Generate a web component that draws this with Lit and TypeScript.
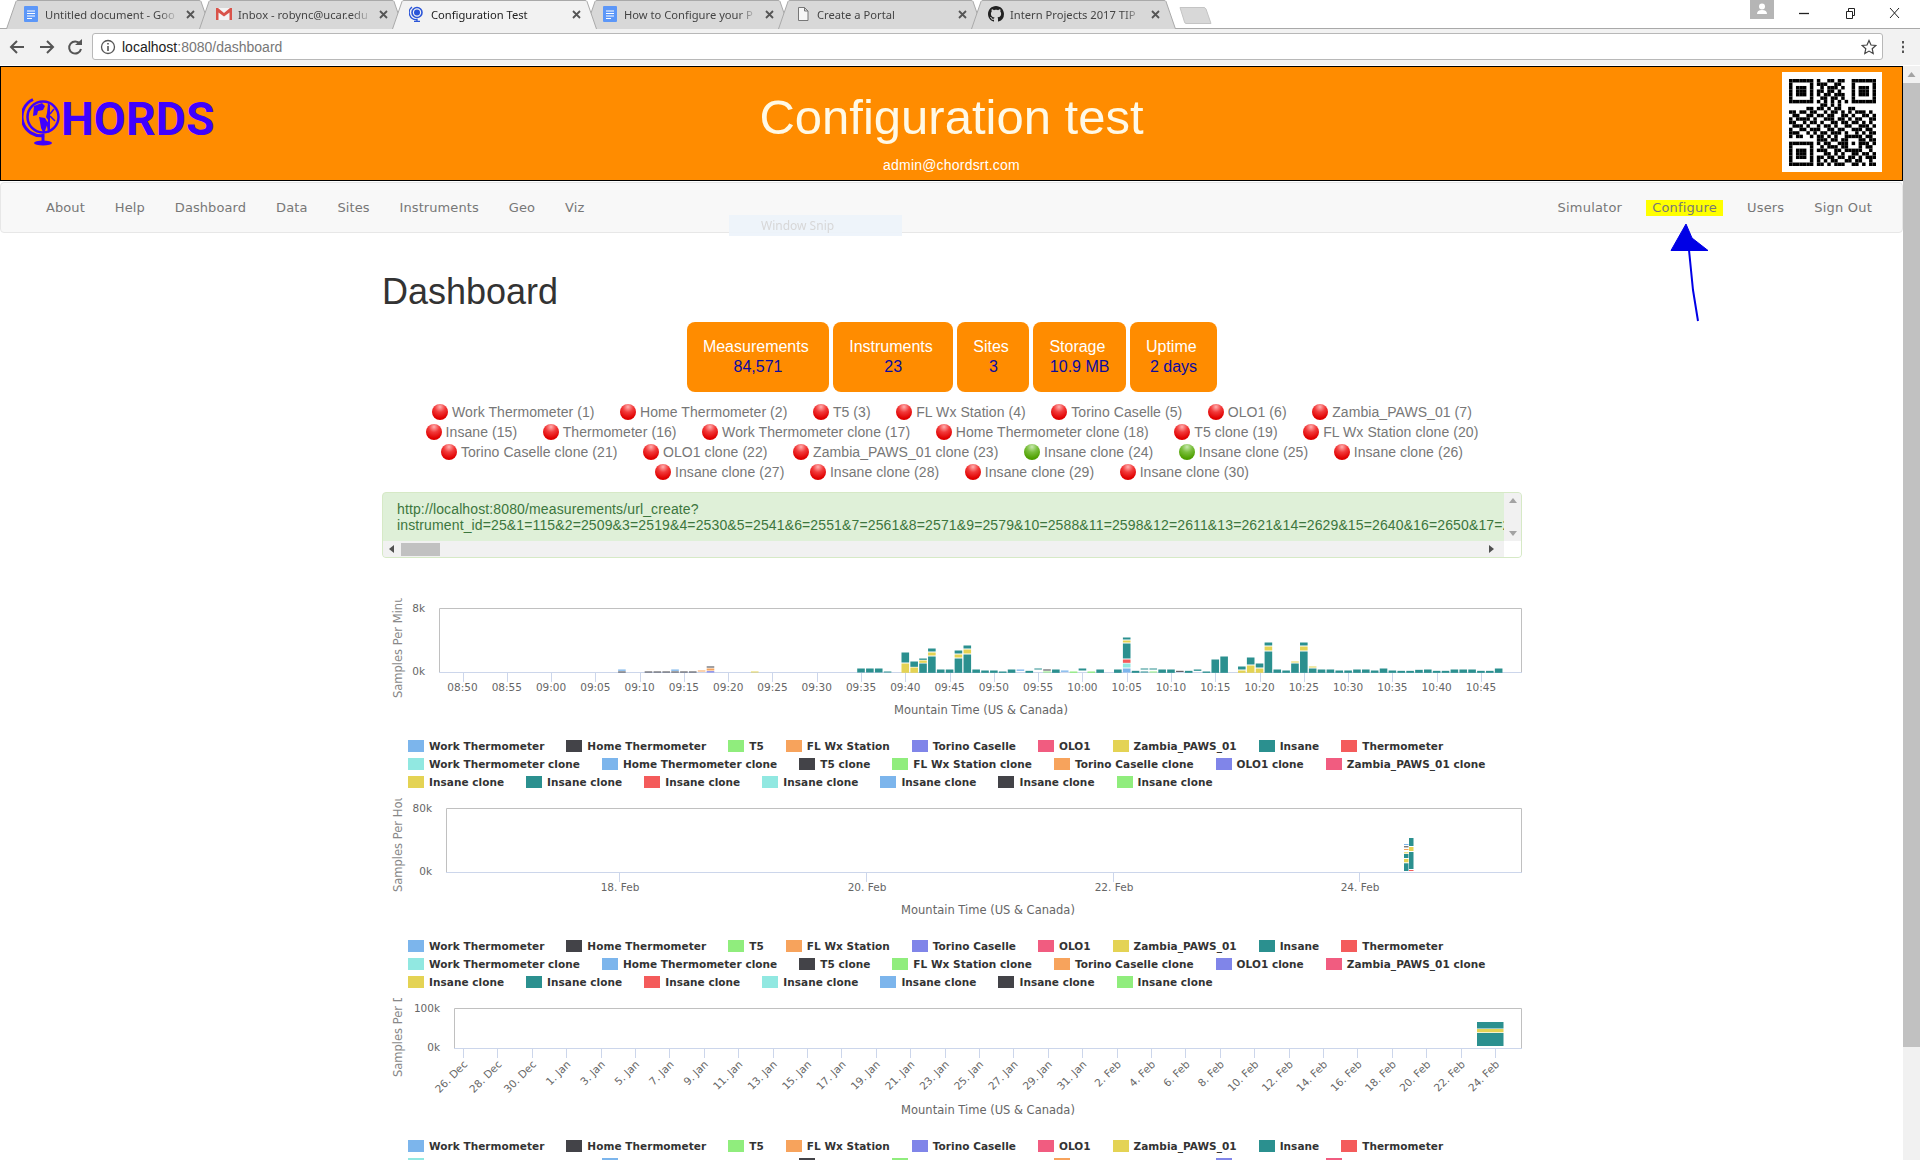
import { LitElement, html, css, svg } from "lit";
import { customElement } from "lit/decorators.js";

const C: Record<string, string> = {
  b: "#7cb5ec", d: "#434348", g: "#90ed7d", o: "#f7a35c", p: "#8085e9",
  k: "#f15c80", y: "#e4d354", t: "#2b908f", r: "#f45b5b", c: "#91e8e1",
};

const LEGEND: [string, string][] = [
  ["Work Thermometer", "b"], ["Home Thermometer", "d"], ["T5", "g"], ["FL Wx Station", "o"],
  ["Torino Caselle", "p"], ["OLO1", "k"], ["Zambia_PAWS_01", "y"], ["Insane", "t"], ["Thermometer", "r"],
  ["Work Thermometer clone", "c"], ["Home Thermometer clone", "b"], ["T5 clone", "d"],
  ["FL Wx Station clone", "g"], ["Torino Caselle clone", "o"], ["OLO1 clone", "p"], ["Zambia_PAWS_01 clone", "k"],
  ["Insane clone", "y"], ["Insane clone", "t"], ["Insane clone", "r"], ["Insane clone", "c"],
  ["Insane clone", "b"], ["Insane clone", "d"], ["Insane clone", "g"],
];

const STATUS: [string, boolean][][] = [
  [["Work Thermometer (1)", false], ["Home Thermometer (2)", false], ["T5 (3)", false], ["FL Wx Station (4)", false], ["Torino Caselle (5)", false], ["OLO1 (6)", false], ["Zambia_PAWS_01 (7)", false]],
  [["Insane (15)", false], ["Thermometer (16)", false], ["Work Thermometer clone (17)", false], ["Home Thermometer clone (18)", false], ["T5 clone (19)", false], ["FL Wx Station clone (20)", false]],
  [["Torino Caselle clone (21)", false], ["OLO1 clone (22)", false], ["Zambia_PAWS_01 clone (23)", false], ["Insane clone (24)", true], ["Insane clone (25)", true], ["Insane clone (26)", false]],
  [["Insane clone (27)", false], ["Insane clone (28)", false], ["Insane clone (29)", false], ["Insane clone (30)", false]],
];

const STATS = [["Measurements", "84,571"], ["Instruments", "23"], ["Sites", "3"], ["Storage", "10.9 MB"], ["Uptime", "2 days"]];

const BARS = `18:b240-244,d246-249;21:d246-249;22:d246-249;23:d246-249;24:b240-244,d246-249;25:d246-249;26:d246-249;27:o243-246;
28:d231-234,o237-243,p245-249;33:y246-249;45:t237-249;46:t237-249;47:t237-249;48:t246-249;
50:y222-250,t189-219;51:y234-250,t216-232;52:t222-250,y213-220,t207-211;53:t201-250,y189-198,t177-186;54:t240-250;55:t240-250;
56:t207-250,y195-204,t183-192;57:t195-250,y180-192,t168-177;58:t240-250;59:t243-250;60:t243-250;61:t246-250;62:t240-250;63:b240-244;64:t244-250;
65:t237-240;66:d240-243,g246-249;67:t240-250;68:b243-247;69:g246-250;70:t237-243;71:g246-250;72:t240-250;74:t240-250;
75:b237-249,c222-234,r210-220,t162-207,y153-159,t144-150;76:t244-250;77:t237-240,t246-249;78:t237-240,g246-249;79:t240-250;80:t240-250;
81:d244-247;82:t244-250;83:t240-244;84:t246-250;85:t210-250;86:t201-250;88:y243-250,t231-240;89:y228-250,t204-225;90:y237-250,t222-234;
91:t186-250,y171-183,t159-168;92:t240-250;93:t243-250;94:t222-250,y216-219;95:t186-250,y171-183,t159-168;96:t237-250,y231-234;
97:t240-250;98:t240-250;99:t243-250;100:t243-250;101:t240-250;102:t240-250;103:t243-250;104:t237-250;105:t243-250;106:t244-250;107:t244-250;
108:t241-250;109:t240-250;110:t244-250;111:t244-250;112:t240-250;113:t240-250;114:t240-250;115:t244-250;116:t244-250;117:t237-250`;

const QR = [
  "1111111" + "01001101100" + "1111111",
  "1000001" + "01110011000" + "1000001",
  "1011101" + "00101110100" + "1011101",
  "1011101" + "01101101000" + "1011101",
  "1011101" + "01011011100" + "1011101",
  "1000001" + "00110110100" + "1000001",
  "1111111" + "01010101010" + "1111111",
  "0000000" + "00110101000" + "0000000",
  "0000011011010110011000000",
  "1101101100101101010111010",
  "0110011011011001101001101",
  "1011110100111011010110011",
  "1100101101001101101101010",
  "0111010010110100110011101",
  "1001101110011011001110110",
  "1110010101101110100101011",
  "1011001011010100111110110",
  "0000000011101101100011011",
  "1111111010110011101011101",
  "1000001001011101100010110",
  "1011101011100110111110010",
  "1011101000110101001101101",
  "1011101011011011011010111",
  "1000001010101100110110010",
  "1111111011010111001101011",
];

const GH = "M8 0C3.58 0 0 3.58 0 8c0 3.54 2.29 6.53 5.47 7.59.4.07.55-.17.55-.38 0-.19-.01-.82-.01-1.49-2.01.37-2.53-.49-2.69-.94-.09-.23-.48-.94-.82-1.13-.28-.15-.68-.52-.01-.53.63-.01 1.08.58 1.23.82.72 1.21 1.87.87 2.33.66.07-.52.28-.87.51-1.07-1.78-.2-3.64-.89-3.64-3.95 0-.87.31-1.59.82-2.15-.08-.2-.36-1.02.08-2.12 0 0 .67-.21 2.2.82.64-.18 1.32-.27 2-.27.68 0 1.36.09 2 .27 1.53-1.04 2.2-.82 2.2-.82.44 1.1.16 1.92.08 2.12.51.56.82 1.27.82 2.15 0 3.07-1.87 3.75-3.65 3.95.29.25.54.73.54 1.48 0 1.07-.01 1.93-.01 2.2 0 .21.15.46.55.38A8.013 8.013 0 0016 8c0-4.42-3.58-8-8-8z";

const icons: Record<string, unknown> = {
  doc: html`<svg class="fav" viewBox="0 0 16 16"><rect x="1" width="14" height="16" rx="1" fill="#5c97f8"/><path d="M4 5h8M4 7.5h8M4 10h8M4 12.5h5" stroke="#fff" stroke-width="1"/></svg>`,
  mail: html`<svg class="fav" viewBox="0 0 16 16"><rect y="2" width="16" height="12" fill="#f4f4f4"/><path d="M0 2h2l6 5 6-5h2v12h-2.5V6.5L8 10.5 2.500 6.500V14H0z" fill="#d9534a"/></svg>`,
  globe: html`<svg class="fav" viewBox="0 0 16 16"><circle cx="8" cy="6.500" r="5" fill="none" stroke="#2b55d8" stroke-width="1.600"/><circle cx="8" cy="6.500" r="3" fill="#2b55d8"/><path d="M3 1A7 7 0 0 0 8 13.500V15M5 15.500h6" fill="none" stroke="#2b55d8" stroke-width="1.300"/></svg>`,
  file: html`<svg class="fav" viewBox="0 0 16 16"><path d="M3.500 1.500h6l3.500 3.500v9.500h-9.500zM9.500 1.500V5h3.500" fill="#f6f6f6" stroke="#777"/></svg>`,
  gh: html`<svg class="fav" viewBox="0 0 16 16"><path d=${GH} fill="#222"/></svg>`,
};

const TABS = [
  ["doc", "Untitled document - Goo", false],
  ["mail", "Inbox - robync@ucar.edu", false],
  ["globe", "Configuration Test", true],
  ["doc", "How to Configure your P", false],
  ["file", "Create a Portal", false],
  ["gh", "Intern Projects 2017 TIP", false],
] as [string, string, boolean][];

const TICKS1 = ["08:50","08:55","09:00","09:05","09:10","09:15","09:20","09:25","09:30","09:35","09:40","09:45","09:50","09:55","10:00","10:05","10:10","10:15","10:20","10:25","10:30","10:35","10:40","10:45"];
const TICKS3 = ["26. Dec","28. Dec","30. Dec","1. Jan","3. Jan","5. Jan","7. Jan","9. Jan","11. Jan","13. Jan","15. Jan","17. Jan","19. Jan","21. Jan","23. Jan","25. Jan","27. Jan","29. Jan","31. Jan","2. Feb","4. Feb","6. Feb","8. Feb","10. Feb","12. Feb","14. Feb","16. Feb","18. Feb","20. Feb","22. Feb","24. Feb"];

function frame(top: number, x0: number, bottom: number, title: string, high: string, titleX: number, titleBase: number) {
  const y0 = top + 18;
  return svg`
    <defs><clipPath id=${"c" + top}><rect x="382" y=${top + 8} width="40" height="130"></rect></clipPath></defs>
    <path d=${`M${x0 + 0.5} ${bottom}V${y0 + 0.5}H1521.500V${bottom}`} fill="none" stroke="#c0c0c0"></path>
    <path d=${`M${x0} ${bottom + 0.5}H1522`} stroke="#ccd6eb"></path>
    <text class="tl" x=${x0 - 14} y=${y0 + 4} text-anchor="end">${high}</text>
    <text class="tl" x=${x0 - 14} y=${bottom + 3} text-anchor="end">0k</text>
    <g clip-path=${`url(#c${top})`}>
      <text class="ttl" transform=${`translate(402,${titleBase}) rotate(-90)`}>${title}</text>
    </g>
    <text class="ttl2" x=${titleX} y=${top + 124} text-anchor="middle">Mountain Time (US &amp; Canada)</text>
  `;
}

function chart1() {
  const slots = BARS.replace(/\s/g, "").split(";").filter(Boolean);
  return html`<svg class="chart" viewBox="382 590 1140 148">
    ${frame(590, 439, 672, "Samples Per Minute", "8k", 981, 698)}
    ${TICKS1.map((t, i) => {
      const x = 462.5 + i * 44.28;
      const rx = Math.round(x) + 0.5;
      return svg`<path d=${`M${rx} 672V682`} stroke="#ccd6eb"></path><text class="tl" x=${x} y="691" text-anchor="middle">${t}</text>`;
    })}
    ${slots.map((s) => {
      const [n, segs] = s.split(":");
      const cx = 462.5 + Number(n) * 8.856;
      return segs.split(",").map((g) => {
        const [a, b] = g.slice(1).split("-").map(Number);
        return svg`<rect x=${cx - 3.8} y=${590 + a / 3 - 0.5} width="7.6" height=${(b - a) / 3} fill=${C[g[0]]}></rect>`;
      });
    })}
  </svg>`;
}

function chart2() {
  const segs: [number, number, number, string][] = [
    [1404, 863.3, 871, "t"], [1404, 859, 862.3, "y"], [1404, 854, 858, "t"], [1404, 852.3, 853.3, "y"],
    [1404, 849, 850, "o"], [1404, 846.3, 847.3, "d"], [1404, 844, 845, "b"],
    [1409, 870, 871, "r"], [1409, 852, 869, "t"], [1409, 847, 851, "y"], [1409, 838, 846, "t"],
  ];
  return html`<svg class="chart" viewBox="382 790 1140 148">
    ${frame(790, 446, 872, "Samples Per Hour", "80k", 988, 892)}
    ${[["18. Feb", 619], ["20. Feb", 866], ["22. Feb", 1113], ["24. Feb", 1359]].map(([t, x]) => svg`
      <path d=${`M${Number(x) + 0.5} 872V882`} stroke="#ccd6eb"></path>
      <text class="tl" x=${Number(x) + 1} y="891" text-anchor="middle">${t}</text>`)}
    ${segs.map(([x, a, b, c]) => svg`<rect x=${x} y=${a} width="4.500" height=${b - a} fill=${C[c]}></rect>`)}
  </svg>`;
}

function chart3() {
  return html`<svg class="chart" viewBox="382 990 1140 148">
    ${frame(990, 454, 1048, "Samples Per Day", "100k", 988, 1077)}
    ${TICKS3.map((t, i) => {
      const x = 463 + i * 34.4;
      const rx = Math.round(x) + 0.5;
      return svg`<path d=${`M${rx} 1048V1058`} stroke="#ccd6eb"></path>
        <text class="tl" text-anchor="end" transform=${`translate(${x + 5},1065) rotate(-45)`}>${t}</text>`;
    })}
    <rect x="1477" y="1022" width="26.500" height="6.500" fill=${C.t}></rect>
    <rect x="1477" y="1029" width="26.500" height="3.300" fill=${C.y}></rect>
    <rect x="1477" y="1033" width="26.500" height="13" fill=${C.t}></rect>
  </svg>`;
}

@customElement("app-root")
export class AppRoot extends LitElement {
  static styles = css`
    :host { display: block; position: relative; width: 1920px; height: 1160px; overflow: hidden; background: #fff; font-family: "Liberation Sans", Arial, sans-serif; }
    .strip { display: flex; height: 28px; padding-left: 6px; background: #fff; }
    .tab { position: relative; width: 205px; height: 28px; margin-right: -12px; flex: none; display: flex; align-items: center; font: 11.2px "Noto Sans", sans-serif; color: #444; }
    .tab.active { z-index: 2; color: #222; }
    .tabshape { position: absolute; left: 0; top: 0; width: 205px; height: 29px; }
    .fav { position: relative; width: 16px; height: 16px; margin-left: 17px; flex: none; }
    .tabtext { position: relative; margin-left: 6px; width: 134px; white-space: nowrap; -webkit-mask-image: linear-gradient(90deg, #000 85%, transparent); mask-image: linear-gradient(90deg, #000 85%, transparent); }
    .tabx { position: relative; margin-left: 7px; margin-right: 0; width: 9px; height: 9px; flex: none; }
    .newtab { width: 33px; height: 17px; margin: 7px 0 0 15px; flex: none; }
    .winctl { margin-left: auto; display: flex; width: 170px; height: 28px; }
    .toolbar { height: 37px; box-sizing: border-box; margin-top: 0; background: #f2f2f2; border-top: 1px solid #a9a9a9; border-bottom: 1px solid #f2f2f2; display: flex; align-items: center; }
    .navbtns { width: 92px; height: 24px; flex: none; }
    .omni { width: 1791px; height: 27px; box-sizing: border-box; background: #fff; border: 1px solid #b8b8b8; border-radius: 3px; display: flex; align-items: center; flex: none; font-size: 14px; color: #777; }
    .omni svg { margin-left: 7px; width: 16px; height: 16px; flex: none; }
    .omni span { margin-left: 6px; }
    .omni b { font-weight: normal; color: #222; }
    .star { margin-left: auto !important; margin-right: 5px; }
    .dots { width: 37px; height: 24px; flex: none; }
    .body { display: flex; height: 1095px; background: #fff; }
    .page { width: 1903px; flex: none; overflow: hidden; }
    .sb { width: 17px; flex: none; background: #f1f1f1; margin-top: 1px; display: flex; flex-direction: column; }
    .sbup { height: 17px; flex: none; }
    .sbthumb { height: 964px; background: #c1c1c1; flex: none; }
    .hdr { margin-top: 1px; height: 115px; box-sizing: border-box; background: #ff8c00; border: 1px solid #000; display: grid; grid-template-columns: 1fr auto 1fr; }
    .logo { display: flex; align-items: flex-start; padding: 31px 0 0 21px; }
    .logo svg { width: 42px; height: 48px; flex: none; margin-right: -3px; }
    .logo span { font: 700 46.5px/46px Roboto, sans-serif; color: #3f00ff; margin-top: -2px; }
    .mid { text-align: center; color: #fff; }
    .mid h2 { margin: 0; padding-top: 22px; font: 400 49px/56px "Liberation Sans", Arial, sans-serif; color: #fff9e6; }
    .mid div { margin-top: 12px; font-size: 14px; line-height: 16px; letter-spacing: .2px; }
    .qrbox { justify-self: end; width: 100px; height: 100px; margin: 5px 20px 0 0; background: #fff; display: flex; align-items: center; justify-content: center; }
    .qrbox svg { width: 87px; height: 87px; display: block; }
    .nav { margin-top: 1px; height: 51px; box-sizing: border-box; background: #f8f8f8; border: 1px solid #e7e7e7; border-radius: 4px; display: flex; align-items: center; justify-content: space-between; padding: 0 15px 0 30px; }
    .nav ul { display: flex; list-style: none; margin: 0; padding: 0; }
    .nav li { padding: 0 15px; font: 13px/16px "DejaVu Sans", sans-serif; color: #777; letter-spacing: .08px; }
    .nav ul.right li { letter-spacing: .2px; }
    .hl { display: block; background: #ff0; margin: 0 -6px; padding: 0 6px; }
    .wrap { width: 1140px; margin: 0 381px 0 382px; }
    h1 { margin: 39px 0 10px; font: 400 36px/40px "Liberation Sans", Arial, sans-serif; color: #333; }
    .stats { display: flex; justify-content: center; gap: 4px; }
    .stat { height: 70px; box-sizing: border-box; padding: 15px 16px; background: #ff8c00; border-radius: 8px; text-align: center; font-size: 16px; line-height: 20px; color: #fff; }
    .stat .lab { padding-right: 4.5px; }
    .stat .val { color: #0a0aa0; }
    .status { margin-top: 10px; }
    .srow { display: flex; justify-content: center; gap: 25.5px; height: 20px; align-items: center; font-size: 14px; color: #777; letter-spacing: .07px; }
    .sitem { display: flex; align-items: center; gap: 4px; white-space: nowrap; }
    .ball { width: 16px; height: 16px; border-radius: 50%; background: radial-gradient(circle at 50% 18%, #ffb0b0 0, #f23a3a 35%, #e00000 75%, #cc0000 100%); flex: none; }
    .ball.on { background: radial-gradient(circle at 50% 18%, #c8e8b0 0, #7bbf3e 35%, #4fa000 75%, #3f8c00 100%); }
    .alert { margin-top: 10px; height: 66px; box-sizing: border-box; background: #dff0d8; border: 1px solid #d6e9c6; border-radius: 4px; overflow: hidden; display: grid; grid-template-columns: 1fr 17px; grid-template-rows: 48px 16px; }
    .url { padding: 8px 0 0 14px; font-size: 14px; line-height: 16px; color: #3c763d; white-space: nowrap; overflow: hidden; letter-spacing: .13px; }
    .vb, .hb { background: #f1f1f1; }
    .vb { display: flex; flex-direction: column; justify-content: space-between; align-items: center; padding: 5px 0; box-sizing: border-box; background: #f1f1f1; }
    .hb { display: flex; align-items: center; padding: 0 6px; }
    .hthumb { width: 39px; height: 13px; background: #c1c1c1; margin-left: 7px; }
    .corner { background: #fff; }
    .arrow { width: 0; height: 0; border: 4px solid transparent; }
    .au { border-top: 0; border-bottom: 5px solid #a3a3a3; }
    .ad { border-bottom: 0; border-top: 5px solid #a3a3a3; }
    .al { border-left: 0; border-right: 5px solid #505050; }
    .ar { border-right: 0; border-left: 5px solid #505050; margin-left: auto; margin-right: 4px; }
    .blk { height: 200px; }
    .first { margin-top: 32px; }
    .chart { display: block; width: 1140px; height: 148px; }
    .tl { font: 10.5px "DejaVu Sans", sans-serif; fill: #666; }
    .ttl { font: 11.5px "DejaVu Sans", sans-serif; fill: #888; }
    .ttl2 { font: 11.5px "DejaVu Sans", sans-serif; fill: #666; }
    .legend { display: flex; flex-wrap: wrap; align-content: flex-start; column-gap: 22px; height: 52px; margin-top: -1px; padding-left: 26px; font: 700 10.5px/18px "DejaVu Sans", sans-serif; color: #333; letter-spacing: .04px; }
    .li { display: flex; align-items: center; gap: 5px; height: 18px; white-space: nowrap; }
    .sw { width: 16px; height: 12px; flex: none; }
    .hand { position: absolute; left: 1660px; top: 220px; width: 60px; height: 105px; }
    .snip { position: absolute; left: 729px; top: 215px; width: 173px; height: 21px; box-sizing: border-box; padding-left: 32px; background: #eef4fb; opacity: .95; font: 12px/21px "Noto Sans", sans-serif; color: #d6d6d6; }
  `;

  render() {
    const legend = html`<div class="legend">${LEGEND.map(([n, c]) => html`<div class="li"><span class="sw" style="background:${C[c]}"></span>${n}</div>`)}</div>`;
    return html`
      <div class="strip">
        ${TABS.map(([ic, t, a]) => html`
          <div class="tab ${a ? "active" : ""}">
            <svg class="tabshape" viewBox="0 0 205 29"><path d="M0.500 29L10 1.500Q10.500 .5 12 .5H193Q194.500 .5 195 1.500L204.500 29" fill=${a ? "#f2f2f2" : "#d8d8d8"} stroke="#a9a9a9"></path></svg>
            ${icons[ic]}
            <div class="tabtext">${t}</div>
            <svg class="tabx" viewBox="0 0 9 9"><path d="M1 1L8 8M8 1L1 8" stroke="#555" stroke-width="1.800"></path></svg>
          </div>`)}
        <svg class="newtab" viewBox="0 0 33 17"><path d="M1 .5H25Q26 .5 27 2L32 16.500H7Q6 16.500 5.500 15z" fill="#d8d8d8" stroke="#c4c4c4"></path></svg>
        <svg class="winctl" viewBox="0 0 170 28">
          <rect x="0" y="0" width="24" height="19" fill="#b5b5b5"></rect>
          <circle cx="12" cy="6.500" r="3" fill="#fff"></circle><path d="M7 14q0-4 5-4t5 4z" fill="#fff"></path>
          <path d="M49 13.500H59" stroke="#222" stroke-width="1.300"></path>
          <path d="M96.500 11.500h6v7h-6zM98.500 11V8.500h6v7h-1.500" fill="none" stroke="#222"></path>
          <path d="M140 8l9 10M149 8l-9 10" stroke="#222"></path>
        </svg>
      </div>
      <div class="toolbar">
        <svg class="navbtns" viewBox="0 0 92 24">
          <path d="M24 12H12M17 6l-6 6 6 6" fill="none" stroke="#555" stroke-width="2"></path>
          <path d="M40 12H52M47 6l6 6-6 6" fill="none" stroke="#555" stroke-width="2"></path>
          <path d="M80 9a6 6 0 1 0 1 5" fill="none" stroke="#555" stroke-width="2"></path><path d="M75 9h7V3z" fill="#555" transform="translate(0,1)"></path>
        </svg>
        <div class="omni">
          <svg viewBox="0 0 16 16"><circle cx="8" cy="8" r="6.500" fill="none" stroke="#555" stroke-width="1.300"></circle><path d="M8 7v5M8 4v1.600" stroke="#555" stroke-width="1.600"></path></svg>
          <span><b>localhost</b>:8080/dashboard</span>
          <svg class="star" viewBox="0 0 16 16"><path d="M8 1.500l2 4.500 4.800.5-3.600 3.200 1 4.800L8 12.100 3.800 14.500l1-4.800L1.200 6.500 6 6z" fill="none" stroke="#444" stroke-width="1.200"></path></svg>
        </div>
        <svg class="dots" viewBox="0 0 37 24"><path d="M20 6v2.500M20 10.800v2.500M20 15.500v2.500" stroke="#555" stroke-width="2"></path></svg>
      </div>
      <div class="body">
        <div class="page">
          <div class="hdr">
            <div class="logo">
              <svg viewBox="0 0 42 48">
                <path d="M11 1.500A19 19 0 0 0 22 37.500" fill="none" stroke="#3f00ff" stroke-width="3"></path>
                <circle cx="21" cy="19" r="15.500" fill="none" stroke="#3f00ff" stroke-width="2.500"></circle>
                <path d="M12 8l8-3 3 3-2 4-5 1-1 4-4 1zM17 19l6 1 3 5-2 5-2 6-3-6-1-6zM26 5l2 2v26l-2 2-1-7 1-6-2-3 1-4z" fill="#3f00ff"></path>
                <path d="M28 16l4-5M28 18l5 5" stroke="#3f00ff" stroke-width="1.500"></path>
                <path d="M21 36v8" stroke="#3f00ff" stroke-width="3"></path>
                <ellipse cx="21" cy="45" rx="9" ry="2.500" fill="#3f00ff"></ellipse>
              </svg>
              <span>HORDS</span>
            </div>
            <div class="mid"><h2>Configuration test</h2><div>admin@chordsrt.com</div></div>
            <div class="qrbox">
              <svg viewBox="0 0 25 25">
                ${QR.map((r, y) => r.split("").map((c, x) => c === "1" ? svg`<rect x=${x} y=${y} width="1" height="1" fill="#000"></rect>` : null))}
              </svg>
            </div>
          </div>
          <div class="nav">
            <ul>${["About", "Help", "Dashboard", "Data", "Sites", "Instruments", "Geo", "Viz"].map((n) => html`<li>${n}</li>`)}</ul>
            <ul class="right"><li>Simulator</li><li><span class="hl">Configure</span></li><li>Users</li><li>Sign Out</li></ul>
          </div>
          <div class="wrap">
            <h1>Dashboard</h1>
            <div class="stats">
              ${STATS.map(([l, v]) => html`<div class="stat"><div class="lab">${l}</div><div class="val">${v}</div></div>`)}
            </div>
            <div class="status">
              ${STATUS.map((row) => html`<div class="srow">${row.map(([t, on]) => html`<div class="sitem"><span class="ball ${on ? "on" : ""}"></span>${t}</div>`)}</div>`)}
            </div>
            <div class="alert">
              <div class="url">http://localhost:8080/measurements/url_create?<br>instrument_id=25&amp;1=115&amp;2=2509&amp;3=2519&amp;4=2530&amp;5=2541&amp;6=2551&amp;7=2561&amp;8=2571&amp;9=2579&amp;10=2588&amp;11=2598&amp;12=2611&amp;13=2621&amp;14=2629&amp;15=2640&amp;16=2650&amp;17=2661&amp;18=2671</div>
              <div class="vb"><span class="arrow au"></span><span class="arrow ad"></span></div>
              <div class="hb"><span class="arrow al"></span><span class="hthumb"></span><span class="arrow ar"></span></div>
              <div class="corner"></div>
            </div>
            <div class="blk first">${chart1()}${legend}</div>
            <div class="blk">${chart2()}${legend}</div>
            <div class="blk">${chart3()}${legend}</div>
          </div>
        </div>
        <div class="sb">
          <svg class="sbup" viewBox="0 0 17 17"><path d="M4.500 11L8.500 6l4 5z" fill="#a3a3a3"></path></svg>
          <div class="sbthumb"></div>
        </div>
      </div>
      <div class="snip">Window Snip</div>
      <svg class="hand" viewBox="1660 220 60 105">
        <path d="M1686 224L1671 250.500L1708 250.500L1692 238z" fill="#0000e6" stroke="#0000e6"></path>
        <path d="M1689 250L1693 290L1698 321" fill="none" stroke="#0000e6" stroke-width="2"></path>
      </svg>
    `;
  }
}
